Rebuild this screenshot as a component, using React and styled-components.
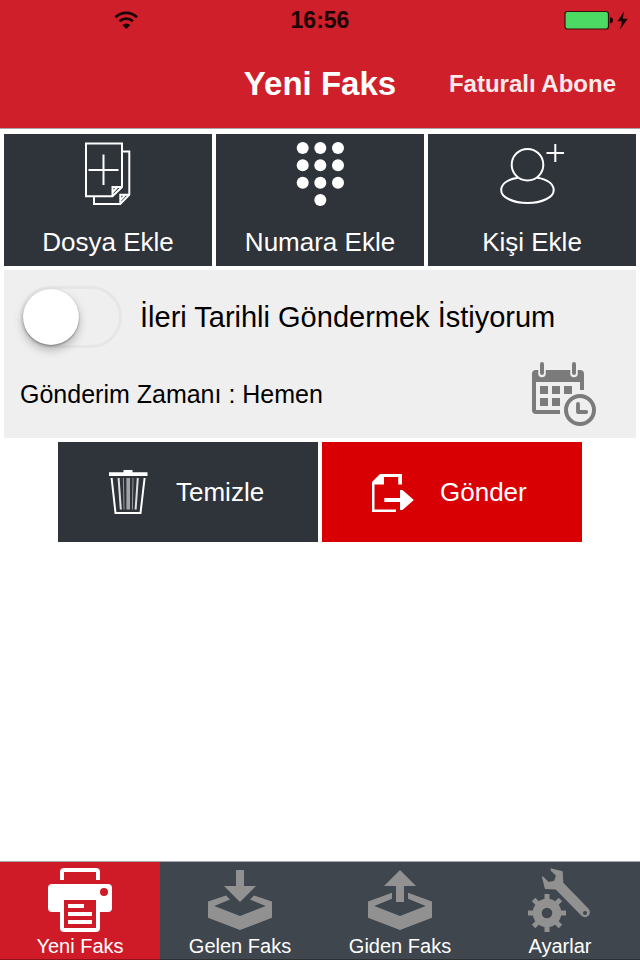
// react
import React, { useState } from 'react'

// 3rd party
import styled, { createGlobalStyle } from 'styled-components'

const GlobalStyle = createGlobalStyle`
  * {
    box-sizing: border-box;
  }

  body {
    margin: 0;
    background: #fff;
    color: #000;
    font-family: 'Liberation Sans', Arial, sans-serif;
  }

  button {
    margin: 0;
    padding: 0;
    border: none;
    background: none;
    color: inherit;
    font-family: inherit;
    cursor: pointer;
  }
`

const Page = styled.div`
  display: flex;
  flex-direction: column;
  min-height: 100vh;
`

const Header = styled.header`
  background: #ce1f2a;
  border-bottom: 1px solid #a9a4a5;
`

const StatusBar = styled.div`
  display: grid;
  grid-template-columns: 1fr auto 1fr;
  align-items: center;
  height: 40px;
  color: #1c0405;
`

const Signal = styled.div`
  display: flex;
  padding-left: 114px;
`

const Power = styled.div`
  display: flex;
  justify-content: flex-end;
  padding-right: 12px;
`

const Clock = styled.time`
  font-size: 23px;
  font-weight: 700;
  line-height: 28px;
`

const NavBar = styled.div`
  display: grid;
  grid-template-columns: 1fr auto 1fr;
  align-items: center;
  height: 88px;
  color: #fff;
`

const Title = styled.h1`
  grid-column: 2;
  margin: 0;
  font-size: 33px;
  font-weight: 700;
  line-height: 40px;
`

const NavButton = styled.button`
  justify-self: end;
  padding-right: 24px;
  color: #fbe9ea;
  font-size: 24px;
  font-weight: 700;
  line-height: 28px;
  white-space: nowrap;
`

const Main = styled.main`
  display: flex;
  flex-direction: column;
  gap: 4px;
  padding: 5px 4px 4px;
`

const CardRow = styled.div`
  display: grid;
  grid-template-columns: repeat(3, 1fr);
  gap: 4px;
`

const Card = styled.button`
  display: flex;
  flex-direction: column;
  align-items: center;
  gap: 20px;
  padding: 8px 0;
  background: #2f343b;
  color: #fff;
  font-size: 26px;
  line-height: 32px;
`

const Panel = styled.section`
  display: flex;
  flex-direction: column;
  gap: 14px;
  padding: 16px 16px 12px;
  background: #efefef;
`

const SwitchLabel = styled.label`
  display: flex;
  align-items: center;
  gap: 18px;
  font-size: 29px;
  line-height: 36px;
`

const Switch = styled.input`
  flex: none;
  appearance: none;
  width: 102px;
  height: 62px;
  margin: 0;
  border: 3px solid #e6e6e6;
  border-radius: 31px;
  background: #efefef;
  cursor: pointer;

  &::before {
    content: '';
    display: block;
    width: 56px;
    height: 56px;
    border-radius: 50%;
    background: #fff;
    box-shadow: 0 1px 2px rgba(0, 0, 0, 0.35), 0 5px 10px rgba(0, 0, 0, 0.25);
  }

  &:checked {
    border-color: #4cd964;
    background: #4cd964;
  }

  &:checked::before {
    margin-left: auto;
  }
`

const TimeRow = styled.div`
  display: flex;
  justify-content: space-between;
  align-items: center;
  padding-right: 24px;
`

const TimeText = styled.p`
  margin: 0;
  font-size: 25px;
  line-height: 32px;
`

const IconButton = styled.button`
  display: flex;
  color: #7b7b7b;
`

const Actions = styled.div`
  display: grid;
  grid-template-columns: repeat(2, 260px);
  justify-content: center;
  gap: 4px;
`

const Action = styled.button`
  display: flex;
  align-items: center;
  gap: 26px;
  height: 100px;
  padding-left: 50px;
  background: ${props => (props.$primary ? '#d90004' : '#2f343b')};
  color: #fff;
  font-size: 26px;
  line-height: 32px;
`

const TabBar = styled.nav`
  display: grid;
  grid-template-columns: repeat(4, 1fr);
  margin-top: auto;
  border-top: 1px solid #a5a9ac;
`

const Tab = styled.button`
  display: flex;
  flex-direction: column;
  align-items: center;
  padding-top: 6px;
  background: ${props => (props.$active ? '#cf1b27' : '#40464d')};
  box-shadow: inset 0 -1px 0 rgba(0, 0, 0, 0.3);
  color: #fff;
  font-size: 20px;
  line-height: 28px;

  svg {
    color: ${props => (props.$active ? '#fff' : '#919191')};
  }
`

const WifiIcon = () => (
  <svg width="24" height="18" viewBox="0 0 24 18" fill="none" stroke="currentColor" strokeWidth="2.8">
    <path d="M1.5 6.2a15.5 15.5 0 0 1 21.5 0" />
    <path d="M5.6 10.3a9.8 9.8 0 0 1 13.3 0" />
    <path d="M12.3 18 8.3 14a5.8 5.8 0 0 1 8 0z" fill="currentColor" stroke="none" />
  </svg>
)

const BatteryIcon = () => (
  <svg width="66" height="20" viewBox="0 0 66 20">
    <rect x="3" y="1.5" width="43.5" height="17.5" rx="2.5" fill="#4cd964" stroke="#3a0d0a" strokeWidth="1.2" />
    <path d="M48 7.2c2 .3 3 1.3 3 3s-1 2.7-3 3z" fill="#1c0405" />
    <path d="M62 1.5 55.5 11.2h4.4L58 19.5l7.8-10.8h-5z" fill="#1c0405" />
  </svg>
)

const FileAddIcon = () => (
  <svg width="64" height="64" viewBox="0 0 64 64" fill="none" stroke="currentColor" strokeWidth="2">
    <path d="M10 1.5h36v43.5l-9.5 9.2H10z" />
    <path d="M36.5 54.2V45H46M36.5 50.5l4.500-5" />
    <path d="M46 9.5h7.3v43.2l-9 9.3H18v-7.8" />
    <path d="M44.3 62v-9.300h9M44.3 58.3l4.5-5" />
    <path d="M27.5 12.5V43M12.5 28h30" />
  </svg>
)

const KeypadIcon = () => (
  <svg width="64" height="64" viewBox="0 0 64 64" fill="currentColor">
    {[6, 23.3, 40.8].map(cy => (
      [14.7, 32.3, 50].map(cx => <circle key={`${cx}-${cy}`} cx={cx} cy={cy} r="6" />)
    ))}
    <circle cx="32.3" cy="58" r="6" />
  </svg>
)

const PersonAddIcon = () => (
  <svg width="64" height="64" viewBox="0 0 64 64" fill="none" stroke="currentColor" strokeWidth="2">
    <circle cx="27.5" cy="22.7" r="15.8" />
    <path d="M18 35.7C8 37 1.2 41.8 1.2 48.2 1.2 55.3 13 61 27.5 61s26.200-5.7 26.200-12.8c0-6.4-6.7-11.2-16.7-12.5" />
    <path d="M55.3 2v18M46.5 11H64" />
  </svg>
)

const CalendarIcon = () => (
  <svg width="64" height="64" viewBox="0 0 64 64" fill="currentColor">
    <path d="M4 8h44a4 4 0 0 1 4 4v16h-4v-8H4v28h24v4H4a4 4 0 0 1-4-4V12a4 4 0 0 1 4-4z" />
    <path d="M10 2v9.5M42 2v9.5" stroke="#efefef" strokeWidth="7.5" strokeLinecap="round" />
    <path d="M10 2v9M42 2v9" stroke="currentColor" strokeWidth="4" strokeLinecap="round" />
    <path d="M8 24h8v8H8zM20 24h8v8h-8zM32 24h8v8h-8zM8 36h8v8H8zM20 36h8v8h-8z" />
    <circle cx="48" cy="48" r="14" fill="#efefef" stroke="currentColor" strokeWidth="4" />
    <path d="M46 41.8V50h8.2" fill="none" stroke="currentColor" strokeWidth="3.8" strokeLinecap="round" strokeLinejoin="round" />
  </svg>
)

const TrashIcon = () => (
  <svg width="42" height="44" viewBox="0 0 42 44" fill="none" stroke="currentColor">
    <path d="M15.5 0h9v2.3h15V6H1V2.3h14.5z" fill="currentColor" stroke="none" />
    <path d="M3.6 8 7.5 43h25L36.6 8" strokeWidth="2" />
    <path d="m10.6 8 2.2 31.5M29.8 8l-2.2 31.5" strokeWidth="2" opacity=".85" />
    <path d="M20.2 8v31.5" strokeWidth="3.6" opacity=".55" />
    <path d="m15.4 8 .6 31.5M25 8l-.6 31.5" strokeWidth="1" opacity=".5" />
  </svg>
)

const SendIcon = () => (
  <svg width="42" height="44" viewBox="0 0 42 44" fill="currentColor">
    <path d="M0 12l8-8h22v10.5h-3.8V7H12v7.5H2.5v25H24V42H0z" />
    <path d="M12.3 28H28v-8h2.5L41.8 30 30.5 40H28v-8H12.3z" />
  </svg>
)

const PrinterIcon = () => (
  <svg width="64" height="64" viewBox="0 0 64 64" fill="currentColor">
    <path d="M12 12V4a4 4 0 0 1 4-4h32a4 4 0 0 1 4 4v8h-4V4H16v8z" />
    <path
      fillRule="evenodd"
      d="M4 16h56a4 4 0 0 1 4 4v20a4 4 0 0 1-4 4h-8v16a4 4 0 0 1-4 4H16a4 4 0 0 1-4-4V44H4a4 4 0 0 1-4-4V20a4 4 0 0 1 4-4zM16 32v28h32V32zM56 20a4 4 0 1 0 0 8 4 4 0 0 0 0-8z"
    />
    <path d="M20 36h16v4H20zM20 44h24v4H20zM20 52h24v4H20z" />
  </svg>
)

const InboxIcon = () => (
  <svg width="64" height="64" viewBox="0 0 64 64" fill="currentColor">
    <path d="M28 2h8v16h12L32 34 16 18h12z" />
    <path d="M0 33.5 18 27.500l4 4L6.3 38 32 48l25.700-10L42 31.500l4-4 18 6v16.300L32 62 0 49.800z" />
  </svg>
)

const OutboxIcon = () => (
  <svg width="64" height="64" viewBox="0 0 64 64" fill="currentColor">
    <path d="M32 2l16 16H36v16h-8V18H16z" />
    <path d="M0 33.5 24 24.700v6L6.3 38 32 48l25.700-10L40 30.700v-6l24 8.800v16.300L32 62 0 49.800z" />
  </svg>
)

const ToolsIcon = () => (
  <svg width="64" height="64" viewBox="0 0 64 64" fill="currentColor">
    <circle cx="19" cy="45" r="9.8" fill="none" stroke="currentColor" strokeWidth="9" />
    {[0, 45, 90, 135, 180, 225, 270, 315].map(angle => (
      <path key={angle} d="M16.500 26h5v7h-5z" transform={`rotate(${angle} 19 45)`} />
    ))}
    <path
      fillRule="evenodd"
      d="M22.500 .3 34.700 3.3l.6 11.500 25 25.700a4.800 4.800 0 0 1-6.800 7.300L27.700 21.500 17 20.900 13.800 8.800l1.400-.4 5.500 5.600 5.600-1.300 1.600-5.200-5-4.500zM57 43a2 2 0 1 0 0 4 2 2 0 0 0 0-4z"
    />
  </svg>
)

const cards = [
  { title: 'Dosya Ekle', icon: FileAddIcon },
  { title: 'Numara Ekle', icon: KeypadIcon },
  { title: 'Kişi Ekle', icon: PersonAddIcon }
]

const tabs = [
  { title: 'Yeni Faks', icon: PrinterIcon },
  { title: 'Gelen Faks', icon: InboxIcon },
  { title: 'Giden Faks', icon: OutboxIcon },
  { title: 'Ayarlar', icon: ToolsIcon }
]

const App = () => {
  const [scheduled, setScheduled] = useState(false)
  const [activeTab, setActiveTab] = useState('Yeni Faks')

  return (
    <Page>
      <GlobalStyle />
      <Header>
        <StatusBar>
          <Signal><WifiIcon /></Signal>
          <Clock>16:56</Clock>
          <Power><BatteryIcon /></Power>
        </StatusBar>
        <NavBar>
          <Title>Yeni Faks</Title>
          <NavButton type="button">Faturalı Abone</NavButton>
        </NavBar>
      </Header>

      <Main>
        <CardRow>
          {
            cards.map(({ title, icon: Icon }) => (
              <Card type="button" key={title}>
                <Icon />
                {title}
              </Card>
            ))
          }
        </CardRow>

        <Panel>
          <SwitchLabel>
            <Switch
              type="checkbox"
              role="switch"
              checked={scheduled}
              onChange={e => setScheduled(e.target.checked)}
            />
            İleri Tarihli Göndermek İstiyorum
          </SwitchLabel>
          <TimeRow>
            <TimeText>Gönderim Zamanı : Hemen</TimeText>
            <IconButton type="button" aria-label="Gönderim Zamanı">
              <CalendarIcon />
            </IconButton>
          </TimeRow>
        </Panel>

        <Actions>
          <Action type="button"><TrashIcon />Temizle</Action>
          <Action type="button" $primary><SendIcon />Gönder</Action>
        </Actions>
      </Main>

      <TabBar>
        {
          tabs.map(({ title, icon: Icon }) => (
            <Tab
              type="button"
              key={title}
              $active={title === activeTab}
              onClick={() => setActiveTab(title)}
            >
              <Icon />
              {title}
            </Tab>
          ))
        }
      </TabBar>
    </Page>
  )
}

export default App
